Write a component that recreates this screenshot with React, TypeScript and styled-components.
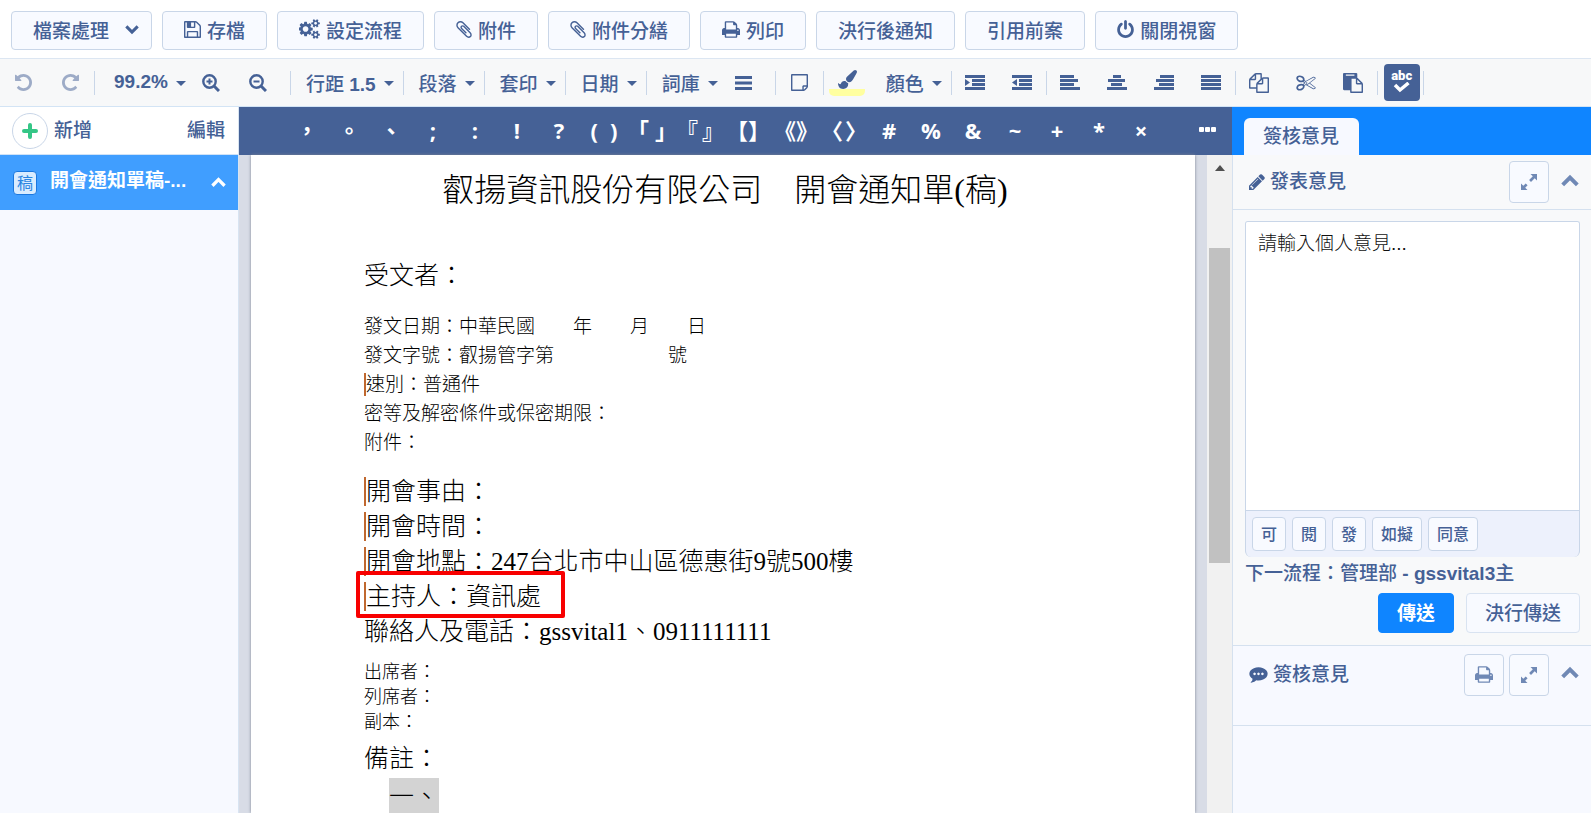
import React from "react";
import styled, { createGlobalStyle, css } from "styled-components";

const ink = "#456196";
const line = "#c9d6e8";
const panel = "#f7f9ff";
const uiFont = `"Liberation Sans", "Noto Sans CJK TC", sans-serif`;
const docFont = `"Liberation Serif", "Noto Sans CJK TC", serif`;

const GlobalStyle = createGlobalStyle`
  *, *::before, *::after { box-sizing: border-box; }
  body { margin: 0; font-family: ${uiFont}; font-size: 19px; color: ${ink}; background: #fff; }
  button, textarea { font-family: inherit; font-size: inherit; color: inherit; margin: 0; }
  button { cursor: pointer; }
  h1, h2, p, ul { margin: 0; padding: 0; font-weight: inherit; list-style: none; }
  svg { display: block; flex: none; }
`;

/* ---------- icons ---------- */

const paths = {
  save: "M512 1536h768v-384h-768v384zm896 0h128v-896q0-14-10-38.5t-20-34.5l-281-281q-10-10-34-20t-39-10v416q0 40-28 68t-68 28h-576q-40 0-68-28t-28-68v-416h-128v1280h128v-416q0-40 28-68t68-28h832q40 0 68 28t28 68v416zm-384-928v-320q0-13-9.5-22.5t-22.5-9.5h-192q-13 0-22.5 9.5t-9.5 22.5v320q0 13 9.5 22.5t22.5 9.5h192q13 0 22.5-9.5t9.5-22.5zm640 32v928q0 40-28 68t-68 28h-1344q-40 0-68-28t-28-68v-1344q0-40 28-68t68-28h928q40 0 88 20t76 48l280 280q28 28 48 76t20 88z",
  cogs: "M832 896q0-106-75-181t-181-75-181 75-75 181 75 181 181 75 181-75 75-181zm768 512q0-52-38-90t-90-38-90 38-38 90q0 53 37.5 90.5t90.5 37.5 90.5-37.5 37.5-90.5zm0-1024q0-52-38-90t-90-38-90 38-38 90q0 53 37.5 90.5t90.5 37.5 90.5-37.5 37.5-90.5zm-384 421v185q0 10-7 19.5t-16 10.5l-155 24q-11 35-32 76 34 48 90 115 7 11 7 20 0 12-7 19-23 30-82.5 89.5t-78.5 59.5q-11 0-21-7l-115-90q-37 19-77 31-11 108-23 155-7 24-30 24h-186q-11 0-20-7.5t-10-17.5l-23-153q-34-10-75-31l-118 89q-7 7-20 7-11 0-21-8-144-133-144-160 0-9 7-19 10-14 41-53t47-61q-23-44-35-82l-152-24q-10-1-17-9.5t-7-19.5v-185q0-10 7-19.5t16-10.5l155-24q11-35 32-76-34-48-90-115-7-11-7-20 0-12 7-20 22-30 82-89t79-59q11 0 21 7l115 90q34-18 77-32 11-108 23-154 7-24 30-24h186q11 0 20 7.5t10 17.5l23 153q34 10 75 31l118-89q8-7 20-7 11 0 21 8 144 133 144 160 0 8-7 19-12 16-42 54t-45 60q23 48 34 82l152 23q10 2 17 10.5t7 19.5zm640 533v140q0 16-149 31-12 27-30 52 51 113 51 138 0 4-4 7-122 71-124 71-8 0-46-47t-52-68q-20 2-30 2t-30-2q-14 21-52 68t-46 47q-2 0-124-71-4-3-4-7 0-25 51-138-18-25-30-52-149-15-149-31v-140q0-16 149-31 13-29 30-52-51-113-51-138 0-4 4-7 4-2 35-20t59-34 30-16q8 0 46 46.5t52 67.5q20-2 30-2t30 2q51-71 92-112l6-2q4 0 124 70 4 3 4 7 0 25-51 138 17 23 30 52 149 15 149 31zm0-1024v140q0 16-149 31-12 27-30 52 51 113 51 138 0 4-4 7-122 71-124 71-8 0-46-47t-52-68q-20 2-30 2t-30-2q-14 21-52 68t-46 47q-2 0-124-71-4-3-4-7 0-25 51-138-18-25-30-52-149-15-149-31v-140q0-16 149-31 13-29 30-52-51-113-51-138 0-4 4-7 4-2 35-20t59-34 30-16q8 0 46 46.5t52 67.5q20-2 30-2t30 2q51-71 92-112l6-2q4 0 124 70 4 3 4 7 0 25-51 138 17 23 30 52 149 15 149 31z",
  clip: "M1596 1385q0 117-79 196t-196 79q-135 0-235-100l-777-776q-113-115-113-271 0-159 110-270t269-111q158 0 273 113l605 606q10 10 10 22 0 16-30.5 46.5t-46.5 30.5q-13 0-23-10l-606-607q-79-77-181-77-106 0-179 75t-73 181q0 105 76 181l776 777q63 63 145 63 64 0 106-42t42-106q0-82-63-145l-581-581q-26-24-60-24-29 0-48 19t-19 48q0 32 25 59l410 410q10 10 10 22 0 16-31 47t-47 31q-12 0-22-10l-410-410q-63-61-63-149 0-82 57-139t139-57q88 0 149 63l581 581q100 98 100 235z",
  print: "M448 1536h896v-256h-896v256zm0-640h896v-384h-160q-40 0-68-28t-28-68v-160h-640v640zm1152 64q0-26-19-45t-45-19-45 19-19 45 19 45 45 19 45-19 19-45zm128 0v416q0 13-9.5 22.5t-22.5 9.5h-224v160q0 40-28 68t-68 28h-960q-40 0-68-28t-28-68v-160h-224q-13 0-22.5-9.5t-9.5-22.5v-416q0-79 56.5-135.5t135.5-56.5h64v-544q0-40 28-68t68-28h672q40 0 88 20t76 48l152 152q28 28 48 76t20 88v256h64q79 0 135.5 56.5t56.5 135.5z",
  power: "M1664 896q0 156-61 298t-164 245-245 164-298 61-298-61-245-164-164-245-61-298q0-182 80.5-343t226.5-270q43-32 95.5-25t83.5 50q32 42 24.5 94.5t-49.5 84.5q-98 74-151.5 181t-53.5 228q0 104 40.5 198.5t109.5 163.5 163.5 109.5 198.5 40.5 198.5-40.5 163.5-109.5 109.5-163.5 40.5-198.5q0-121-53.5-228t-151.5-181q-42-32-49.5-84.5t24.5-94.5q31-43 84-50t95 25q146 109 226.5 270t80.5 343zm-640-768v640q0 52-38 90t-90 38-90-38-38-90v-640q0-52 38-90t90-38 90 38 38 90z",
  undo: "M1664 896q0 156-61 298t-164 245-245 164-298 61q-172 0-327-72.5t-264-204.5q-7-10-6.5-22.5t8.5-20.5l137-138q10-9 25-9 16 2 23 12 73 95 179 147t225 52q104 0 198.5-40.5t163.5-109.5 109.5-163.5 40.5-198.5-40.5-198.5-109.5-163.5-163.5-109.5-198.5-40.5q-98 0-188 35.5t-160 101.5l137 138q31 30 14 69-17 40-59 40h-448q-26 0-45-19t-19-45v-448q0-42 40-59 39-17 69 14l130 129q107-101 244.5-156.5t284.5-55.5q156 0 298 61t245 164 164 245 61 298z",
  note: "M1400 1280h-248v248q29-10 41-22l185-185q12-12 22-41zm-280-128h288v-896h-1280v1280h896v-288q0-40 28-68t68-28zm416-928v1024q0 40-20 88t-48 76l-184 184q-28 28-76 48t-88 20h-1024q-40 0-68-28t-28-68v-1344q0-40 28-68t68-28h1344q40 0 68 28t28 68z",
  brush: "M1615 0q70 0 122.5 46.5t52.5 116.5q0 63-45 151-332 629-465 752-97 91-218 91-126 0-216.5-92.5t-90.5-219.5q0-128 92-212l638-579q59-54 130-54zm-909 1034q39 76 106.5 130t150.5 76l1 71q4 213-129.5 347t-348.5 134q-123 0-218-46.5t-152.5-127.5-86.5-183-29-220q7 5 41 30t62 44.5 59 36.5 46 17q41 0 55-37 25-66 57.5-112.5t69.5-76 88-47.5 103-25.5 125-10.5z",
  copy: "M1696 384q40 0 68 28t28 68v1216q0 40-28 68t-68 28h-960q-40 0-68-28t-28-68v-288h-544q-40 0-68-28t-28-68v-672q0-40 20-88t48-76l408-408q28-28 76-48t88-20h416q40 0 68 28t28 68v328q68-40 128-40h416zm-544 213l-299 299h299v-299zm-640-384l-299 299h299v-299zm196 647l316-316v-416h-384v416q0 40-28 68t-68 28h-416v640h512v-256q0-40 20-88t48-76zm956 804v-1152h-384v416q0 40-28 68t-68 28h-416v640h896z",
  cut: "M960 896q26 0 45 19t19 45-19 45-45 19-45-19-19-45 19-45 45-19zm300 64l507 398q28 20 25 56-5 35-35 51l-128 64q-13 7-29 7-17 0-31-8l-690-387-110 66q-8 4-12 5 14 49 10 97-7 77-56 147.5t-132 123.5q-132 84-277 84-136 0-222-78-90-84-79-207 7-76 56-147t131-124q132-84 278-84 83 0 151 31 9-13 22-22l122-73-122-73q-13-9-22-22-68 31-151 31-146 0-278-84-82-53-131-124t-56-147q-5-59 15.5-113t63.5-93q85-79 222-79 145 0 277 84 83 52 132 123t56 148q4 48-10 97 4 1 12 5l110 66 690-387q14-8 31-8 16 0 29 7l128 64q30 16 35 51 3 36-25 56zm-681-260q46-42 21-108t-106-117q-92-59-192-59-74 0-113 36-46 42-21 108t106 117q92 59 192 59 74 0 113-36zm-85 745q81-51 106-117t-21-108q-39-36-113-36-100 0-192 59-81 51-106 117t21 108q39 36 113 36 100 0 192-59zm178-613l96 58v-11q0-36 33-56l14-8-79-47-26 26q-3 3-10 11t-12 12q-2 2-4 3.5t-3 2.5zm224 224l96 32 736-576-128-64-768 431v113l-160 96 9 8q2 2 7 6 4 4 11 12t11 12l26 26zm704 416l128-64-520-408-177 138q-2 3-13 7z",
  paste: "M768 1664h896v-640h-416q-40 0-68-28t-28-68v-416h-384v1152zm256-1440v-64q0-13-9.5-22.5t-22.5-9.5h-704q-13 0-22.5 9.5t-9.5 22.5v64q0 13 9.5 22.5t22.5 9.5h704q13 0 22.5-9.5t9.5-22.5zm256 672h299l-299-299v299zm512 128v672q0 40-28 68t-68 28h-960q-40 0-68-28t-28-68v-160h-544q-40 0-68-28t-28-68v-1344q0-40 28-68t68-28h1088q40 0 68 28t28 68v328q21 13 36 28l408 408q28 28 48 76t20 88z",
  pencil: "M491 1536l91-91-235-235-91 91v107h128v128h107zm523-928q0-22-22-22-10 0-17 7l-542 542q-7 7-7 17 0 22 22 22 10 0 17-7l542-542q7-7 7-17zm-54-192l416 416-832 832h-416v-416zm683 96q0 53-37 90l-166 166-416-416 166-165q36-38 90-38 53 0 91 38l235 234q37 39 37 91z",
  comment: "M640 896q0-53-37.5-90.5t-90.5-37.5-90.5 37.5-37.5 90.5 37.5 90.5 90.5 37.5 90.5-37.5 37.5-90.5zm384 0q0-53-37.5-90.5t-90.5-37.5-90.5 37.5-37.5 90.5 37.5 90.5 90.5 37.5 90.5-37.5 37.5-90.5zm384 0q0-53-37.5-90.5t-90.5-37.5-90.5 37.5-37.5 90.5 37.5 90.5 90.5 37.5 90.5-37.5 37.5-90.5zm384 0q0 174-120 321.5t-326 233-450 85.5q-110 0-211-18-173 173-435 229-52 10-86 13-12 1-22-6t-13-18q-4-15 20-37 5-5 23.5-21.5t25.5-23.5 23.5-25.5 24-31.5 20.5-37 20-48 14.5-57.5 12.5-72.5q-146-90-229.5-216.5t-83.5-269.5q0-174 120-321.5t326-233 450-85.5 450 85.5 326 233 120 321.5z",
};

const boxes: Record<keyof typeof paths, string> = {
  save: "128 128 1536 1536",
  cogs: "0 0 1856 1792",
  clip: "192 130 1408 1536",
  print: "64 128 1664 1536",
  power: "128 0 1536 1664",
  undo: "128 128 1536 1536",
  note: "0 128 1536 1536",
  brush: "0 0 1792 1792",
  copy: "0 0 1792 1792",
  cut: "0 128 1792 1664",
  paste: "0 0 1792 1792",
  pencil: "128 128 1536 1536",
  comment: "0 128 1792 1664",
};

function Icon({ name, w, h, flip }: { name: keyof typeof paths; w: number; h: number; flip?: boolean }) {
  return (
    <svg width={w} height={h} viewBox={boxes[name]} fill="currentColor" aria-hidden="true">
      <path d={paths[name]} transform={flip ? "matrix(-1 0 0 1 1792 0)" : undefined} />
    </svg>
  );
}

function Chevron({ up, size }: { up?: boolean; size: number }) {
  return (
    <svg width={size} height={size} viewBox="0 0 16 16" fill="none" stroke="currentColor" strokeWidth="3.500" aria-hidden="true">
      <path d={up ? "M1.500 11.500L8 5l6.500 6.500" : "M1.500 5L8 11.500 14.500 5"} />
    </svg>
  );
}

function Magnifier({ plus }: { plus?: boolean }) {
  return (
    <svg width="18" height="18" viewBox="0 0 18 18" fill="none" stroke="currentColor" aria-hidden="true">
      <circle cx="7.500" cy="7.500" r="6.200" strokeWidth="2.400" />
      <path d="M12 12l5 5" strokeWidth="3" />
      <path d={plus ? "M4.500 7.500h6M7.500 4.500v6" : "M4.500 7.500h6"} strokeWidth="2" />
    </svg>
  );
}

function Lines({ rows, arrow }: { rows: [number, number][]; arrow?: string }) {
  return (
    <svg width="20" height="16" viewBox="0 0 20 16" fill="currentColor" aria-hidden="true">
      {rows.map(([x, w], i) => (
        <rect key={i} x={x} y={i * 4} width={w} height="3" />
      ))}
      {arrow && <path d={arrow} />}
    </svg>
  );
}

function Expand() {
  return (
    <svg width="18" height="18" viewBox="0 0 18 18" fill="currentColor" aria-hidden="true">
      <path d="M10.500 1H17v6.500l-2.300-2.300-3.700 3.700-1.900-1.900 3.700-3.700zM7.500 17H1v-6.500l2.300 2.300 2.400-2.400 1.900 1.900-2.400 2.400z" />
    </svg>
  );
}

/* ---------- page frame ---------- */

const Shell = styled.div`
  display: flex;
  flex-direction: column;
  height: 100vh;
  overflow: hidden;
`;

const ActionBar = styled.header`
  display: flex;
  flex: none;
  align-items: center;
  gap: 10px;
  padding: 11px 11px 8px;
  border-bottom: 1px solid #dce6f2;
`;

const OutlineButton = styled.button<{ $menu?: boolean }>`
  display: flex;
  flex: none;
  align-items: center;
  gap: 6px;
  height: 39px;
  padding: 0 21px 3px;
  border: 1px solid ${line};
  border-radius: 4px;
  background: #f8faff;
  font-weight: 500;
  white-space: nowrap;
  ${(p) => p.$menu && css`gap: 16px; padding-right: 12px;`}
`;

const Tools = styled.div`
  display: flex;
  flex: none;
  align-items: center;
  height: 48px;
  background: #f7f8f9;
  border-bottom: 1px solid #d3e4f5;
`;

const Group = styled.div<{ $tail?: boolean }>`
  display: flex;
  align-items: center;
  height: 24px;
  padding-right: ${(p) => (p.$tail ? 8 : 0)}px;
  border-right: 1px solid ${line};
`;

const ToolButton = styled.button<{ $off?: boolean }>`
  display: flex;
  align-items: center;
  justify-content: center;
  width: 47px;
  height: 38px;
  padding: 0;
  border: 0;
  background: none;
  opacity: ${(p) => (p.$off ? 0.5 : 1)};
`;

const DropButton = styled.button<{ $left?: number; $right?: number }>`
  display: flex;
  align-items: center;
  gap: 8px;
  height: 38px;
  padding: 0 ${(p) => p.$right ?? 9}px 1px ${(p) => p.$left ?? 15}px;
  border: 0;
  background: none;
  font-weight: 500;
  white-space: nowrap;
  &::after {
    content: "";
    margin-top: 3px;
    border: 5px solid transparent;
    border-top-color: ${ink};
    border-bottom: 0;
  }
`;

const Highlighter = styled(ToolButton)`
  flex-direction: column;
  height: 26px;
  &::after {
    content: "";
    width: 36px;
    height: 7px;
    border-radius: 0 0 5px 5px;
    background: #ffffa0;
  }
`;

const SpellButton = styled.button`
  display: flex;
  flex-direction: column;
  align-items: center;
  justify-content: center;
  width: 36px;
  height: 37px;
  margin: 0 3px 0 6px;
  padding: 0 0 2px;
  border: 0;
  border-radius: 4px;
  background: ${ink};
  color: #fff;
  font: 900 13px/12px Roboto, sans-serif;
`;

const Workspace = styled.div`
  display: flex;
  flex: 1;
  min-height: 0;
`;

/* ---------- sidebar ---------- */

const Sidebar = styled.aside`
  flex: none;
  width: 239px;
  border-right: 1px solid #d8e4f2;
  background: ${panel};
`;

const SidebarHead = styled.div`
  display: flex;
  align-items: center;
  gap: 6px;
  height: 48px;
  padding: 0 13px 0 12px;
  border-bottom: 1px solid #cfe2f7;
  background: #fff;
`;

const RoundButton = styled.button`
  display: grid;
  place-items: center;
  width: 36px;
  height: 36px;
  padding: 0;
  border: 1px solid ${line};
  border-radius: 50%;
  background: #fff;
  color: #35c686;
`;

const TextButton = styled.button`
  padding: 0 0 5px;
  border: 0;
  background: none;
  font-weight: 500;
  &:last-child { margin-left: auto; }
`;

const DraftItem = styled.button`
  display: flex;
  align-items: center;
  width: 100%;
  height: 55px;
  padding: 0 12px 0 13px;
  border: 0;
  background: #409eff;
  color: #fff;
  font-weight: 700;
  text-align: left;
`;

const DraftBadge = styled.span`
  width: 24px;
  height: 24px;
  margin-right: 13px;
  border: 1px solid #1a78e0;
  border-radius: 4px;
  background: #d9ecff;
  color: #2b86e2;
  font-size: 16px;
  font-weight: 400;
  line-height: 23px;
  text-align: center;
`;

const DraftName = styled.span`
  flex: 1;
  padding-bottom: 8px;
`;

/* ---------- editor ---------- */

const Editor = styled.main`
  display: flex;
  flex: 1;
  flex-direction: column;
  min-width: 0;
`;

const SymbolBar = styled.div`
  display: flex;
  flex: none;
  align-items: center;
  height: 48px;
  padding: 0 6px 0 47px;
  background: ${ink};
  color: #fff;
`;

const SymbolButton = styled.button<{ $pairGap?: number }>`
  display: flex;
  flex: none;
  align-items: center;
  justify-content: center;
  gap: ${(p) => p.$pairGap ?? 0}px;
  width: ${(p) => (p.$pairGap === undefined ? 42 : 48)}px;
  height: 48px;
  padding: 0 0 2px;
  border: 0;
  background: none;
  font: 700 22px/46px "Open Sans", "Noto Sans CJK TC", sans-serif;
  white-space: nowrap;
`;

const MoreButton = styled.button`
  display: flex;
  gap: 1px;
  margin-left: auto;
  padding: 0 10px 4px;
  border: 0;
  background: none;
  i { width: 5px; height: 5px; border-radius: 1px; background: #fff; }
`;

const Viewport = styled.div`
  display: flex;
  flex: 1;
  min-height: 0;
  background: #d8dce6;
`;

const Paper = styled.article`
  flex: 1;
  margin: 0 12px;
  padding: 15px 113px 0;
  overflow: hidden;
  background: #fff;
  box-shadow: 0 0 3px #7d8494;
  color: #000;
  font-family: ${docFont};
  font-weight: 300;
`;

const Title = styled.h1`
  padding-left: 4px;
  font-size: 32px;
  line-height: 40px;
  text-align: center;
  white-space: nowrap;
`;

const Block = styled.div<{ $size: number; $row: number; $top: number }>`
  margin-top: ${(p) => p.$top}px;
  font-size: ${(p) => p.$size}px;
  line-height: ${(p) => p.$row}px;
  white-space: pre;
`;

const Field = styled.p<{ $marked?: boolean }>`
  position: relative;
  display: flex;
  width: max-content;
  ${(p) => p.$marked && css`
    &::before { content: ""; width: 2px; margin: 3px 0; background: #c0682f; }
  `}
`;

const RedFrame = styled.span`
  position: absolute;
  inset: -8px -24px -4px -8px;
  border: 4px solid #f80000;
  border-radius: 2px;
`;

const ListMark = styled.span`
  display: inline-block;
  margin-left: 25px;
  background: #d3d3d3;
`;

const Scrollbar = styled.div`
  flex: none;
  width: 25px;
  padding: 10px 2px 0;
  background: #f1f1f1;
  &::before {
    content: "";
    display: block;
    width: 0;
    margin: 0 auto;
    border: 5px solid transparent;
    border-top: 0;
    border-bottom: 6px solid #505050;
  }
  &::after {
    content: "";
    display: block;
    height: 315px;
    margin-top: 77px;
    background: #c1c1c1;
  }
`;

/* ---------- review panel ---------- */

const Review = styled.aside`
  display: flex;
  flex: none;
  flex-direction: column;
  width: 359px;
  background: ${panel};
`;

const TabStrip = styled.div`
  display: flex;
  align-items: flex-end;
  height: 48px;
  padding: 0 12px;
  background: #0f85ff;
`;

const Tab = styled.button`
  height: 37px;
  padding: 0 20px 4px 19px;
  border: 0;
  border-radius: 6px 6px 0 0;
  background: ${panel};
  font-weight: 500;
`;

const Section = styled.section<{ $grey?: boolean }>`
  border: 1px solid #d5e1ef;
  border-width: 0 0 1px 1px;
  background: ${(p) => (p.$grey ? "#f8f9fa" : panel)};
`;

const Rest = styled.div`
  flex: 1;
  border-left: 1px solid #d5e1ef;
`;

const SectionHead = styled.div<{ $tall?: boolean }>`
  display: flex;
  align-items: center;
  gap: 5px;
  height: ${(p) => (p.$tall ? 79 : 55)}px;
  padding: 0 8px ${(p) => (p.$tall ? 22 : 0)}px 16px;
  border-bottom: ${(p) => (p.$tall ? 0 : 1)}px solid #d5e1ef;
  h2 {
    flex: 1;
    padding-bottom: 5px;
    font-size: 19px;
    font-weight: 500;
  }
`;

const SquareButton = styled.button`
  display: grid;
  place-items: center;
  width: 40px;
  height: 42px;
  padding: 0;
  border: 1px solid ${line};
  border-radius: 4px;
  background: #f8faff;
  color: #7089b5;
`;

const FoldButton = styled.button`
  width: 29px;
  padding: 0 0 3px 7px;
  border: 0;
  background: none;
  color: #7089b5;
`;

const Form = styled.form`
  padding: 11px 11px 12px 12px;
`;

const Opinion = styled.div`
  border: 1px solid ${line};
  border-bottom: 0;
  border-radius: 3px 3px 6px 6px;
  background: #edf1fc;
  overflow: hidden;
  textarea {
    display: block;
    width: 100%;
    height: 289px;
    padding: 10px 12px;
    border: 0;
    border-bottom: 1px solid ${line};
    background: #fff;
    line-height: 24px;
    resize: none;
    font-weight: 300;
    outline: 0;
  }
  textarea::placeholder { color: #111; opacity: 1; }
`;

const Phrases = styled.div`
  display: flex;
  gap: 6px;
  padding: 6px;
`;

const Phrase = styled.button`
  height: 34px;
  padding: 0 8px 3px;
  border: 1px solid ${line};
  border-radius: 4px;
  background: #f8faff;
  font-size: 16px;
  font-weight: 500;
`;

const NextStep = styled.p`
  padding: 3px 0 5px;
  font-weight: 500;
  line-height: 28px;
`;

const Submit = styled.div`
  display: flex;
  justify-content: flex-end;
  gap: 12px;
`;

const SendButton = styled.button<{ $primary?: boolean }>`
  height: 40px;
  padding: 0 18px 4px;
  border: 1px solid ${(p) => (p.$primary ? "#0f85ff" : "#d9e3f1")};
  border-radius: 4px;
  background: ${(p) => (p.$primary ? "#0f85ff" : "#f8faff")};
  color: ${(p) => (p.$primary ? "#fff" : ink)};
  font-weight: ${(p) => (p.$primary ? 700 : 500)};
`;

const singles = ["，", "。", "、", ";", ":", "!", "?"];
const pairs: [string, number][] = [["()", 12], ["「」", 6], ["『』", 4], ["【】", 0], ["《》", 0], ["〈〉", 2]];
const signs = ["#", "%", "&", "~", "+", "*", "×"];
const phrases = ["可", "閱", "發", "如擬", "同意"];

export default function App() {
  return (
    <Shell lang="zh-Hant-TW">
      <GlobalStyle />
      <ActionBar>
        <OutlineButton $menu>檔案處理<Chevron size={14} /></OutlineButton>
        <OutlineButton><Icon name="save" w={17} h={17} />存檔</OutlineButton>
        <OutlineButton><Icon name="cogs" w={21} h={20} />設定流程</OutlineButton>
        <OutlineButton><Icon name="clip" w={16} h={17} />附件</OutlineButton>
        <OutlineButton><Icon name="clip" w={16} h={17} />附件分繕</OutlineButton>
        <OutlineButton><Icon name="print" w={18} h={17} />列印</OutlineButton>
        <OutlineButton>決行後通知</OutlineButton>
        <OutlineButton>引用前案</OutlineButton>
        <OutlineButton><Icon name="power" w={17} h={18} />關閉視窗</OutlineButton>
      </ActionBar>

      <Tools role="toolbar">
        <Group>
          <ToolButton $off aria-label="復原"><Icon name="undo" w={17} h={17} /></ToolButton>
          <ToolButton $off aria-label="重做"><Icon name="undo" w={17} h={17} flip /></ToolButton>
        </Group>
        <Group $tail>
          <DropButton $left={19} $right={2}><b>99.2%</b></DropButton>
          <ToolButton aria-label="放大"><Magnifier plus /></ToolButton>
          <ToolButton aria-label="縮小"><Magnifier /></ToolButton>
        </Group>
        <Group><DropButton><span>行距 <b>1.5</b></span></DropButton></Group>
        <Group><DropButton>段落</DropButton></Group>
        <Group><DropButton>套印</DropButton></Group>
        <Group><DropButton>日期</DropButton></Group>
        <Group $tail>
          <DropButton $right={2}>詞庫</DropButton>
          <ToolButton aria-label="清單">
            <svg width="17" height="14" viewBox="0 0 17 14" fill="currentColor"><path d="M0 0h17v3H0zM0 5.500h17v3H0zM0 11h17v3H0z" /></svg>
          </ToolButton>
        </Group>
        <Group><ToolButton aria-label="便箋"><Icon name="note" w={17} h={17} /></ToolButton></Group>
        <Group>
          <Highlighter aria-label="螢光筆"><Icon name="brush" w={19} h={19} /></Highlighter>
          <DropButton>顏色</DropButton>
        </Group>
        <Group>
          <ToolButton aria-label="增加縮排"><Lines rows={[[0, 20], [7, 13], [7, 13], [0, 20]]} arrow="M0 4l5 3.500L0 11z" /></ToolButton>
          <ToolButton aria-label="減少縮排"><Lines rows={[[0, 20], [7, 13], [7, 13], [0, 20]]} arrow="M5 4L0 7.500 5 11z" /></ToolButton>
        </Group>
        <Group>
          <ToolButton aria-label="靠左"><Lines rows={[[0, 14], [0, 18], [0, 14], [0, 20]]} /></ToolButton>
          <ToolButton aria-label="置中"><Lines rows={[[6, 8], [1, 17], [4, 11], [0, 20]]} /></ToolButton>
          <ToolButton aria-label="靠右"><Lines rows={[[6, 14], [2, 18], [5, 15], [0, 20]]} /></ToolButton>
          <ToolButton aria-label="左右對齊"><Lines rows={[[0, 20], [0, 20], [0, 20], [0, 20]]} /></ToolButton>
        </Group>
        <Group>
          <ToolButton aria-label="複製"><Icon name="copy" w={20} h={20} /></ToolButton>
          <ToolButton aria-label="剪下"><Icon name="cut" w={20} h={18} /></ToolButton>
          <ToolButton aria-label="貼上"><Icon name="paste" w={20} h={20} /></ToolButton>
        </Group>
        <Group>
          <SpellButton aria-label="拼字檢查">
            abc
            <svg width="17" height="11" viewBox="0 0 17 11" fill="none" stroke="#fff" strokeWidth="3.500"><path d="M2 3l5 5 8.500-7" /></svg>
          </SpellButton>
        </Group>
      </Tools>

      <Workspace>
        <Sidebar>
          <SidebarHead>
            <RoundButton aria-label="新增文件">
              <svg width="16" height="16" viewBox="0 0 16 16" fill="none" stroke="currentColor" strokeWidth="4" strokeLinecap="round"><path d="M8 2v12M2 8h12" /></svg>
            </RoundButton>
            <TextButton>新增</TextButton>
            <TextButton>編輯</TextButton>
          </SidebarHead>
          <DraftItem>
            <DraftBadge>稿</DraftBadge>
            <DraftName>開會通知單稿-...</DraftName>
            <Chevron up size={15} />
          </DraftItem>
        </Sidebar>

        <Editor>
          <SymbolBar>
            {singles.map((s) => <SymbolButton key={s}>{s}</SymbolButton>)}
            {pairs.map(([s, gap]) => (
              <SymbolButton key={s} $pairGap={gap}><span>{s[0]}</span><span>{s[1]}</span></SymbolButton>
            ))}
            {signs.map((s) => <SymbolButton key={s}>{s}</SymbolButton>)}
            <MoreButton aria-label="更多"><i /><i /><i /></MoreButton>
          </SymbolBar>
          <Viewport>
            <Paper>
              <Title>叡揚資訊股份有限公司　開會通知單(稿)</Title>
              <Block $size={25} $row={35} $top={48}><Field>受文者：</Field></Block>
              <Block $size={19} $row={29} $top={19}>
                <Field>發文日期：中華民國　　年　　月　　日</Field>
                <Field>發文字號：叡揚管字第　　　　　　號</Field>
                <Field $marked>速別：普通件</Field>
                <Field>密等及解密條件或保密期限：</Field>
                <Field>附件：</Field>
              </Block>
              <Block $size={25} $row={35} $top={17}>
                <Field $marked>開會事由：</Field>
                <Field $marked>開會時間：</Field>
                <Field $marked>開會地點：247台北市中山區德惠街9號500樓</Field>
                <Field $marked>主持人：資訊處<RedFrame /></Field>
                <Field>聯絡人及電話：gssvital1、0911111111</Field>
              </Block>
              <Block $size={18} $row={25} $top={11}>
                <Field>出席者：</Field>
                <Field>列席者：</Field>
                <Field>副本：</Field>
              </Block>
              <Block $size={25} $row={38} $top={5}>
                <Field>備註：</Field>
                <ListMark>一、</ListMark>
              </Block>
            </Paper>
            <Scrollbar />
          </Viewport>
        </Editor>

        <Review>
          <TabStrip><Tab>簽核意見</Tab></TabStrip>
          <Section $grey>
            <SectionHead>
              <Icon name="pencil" w={16} h={16} />
              <h2>發表意見</h2>
              <SquareButton aria-label="展開"><Expand /></SquareButton>
              <FoldButton aria-label="收合"><Chevron up size={18} /></FoldButton>
            </SectionHead>
            <Form onSubmit={(e) => e.preventDefault()}>
              <Opinion>
                <textarea aria-label="發表意見" placeholder="請輸入個人意見..." />
                <Phrases>
                  {phrases.map((p) => <Phrase key={p} type="button">{p}</Phrase>)}
                </Phrases>
              </Opinion>
              <NextStep>下一流程：管理部 <b>- gssvital3</b>主</NextStep>
              <Submit>
                <SendButton $primary>傳送</SendButton>
                <SendButton type="button">決行傳送</SendButton>
              </Submit>
            </Form>
          </Section>
          <Section>
            <SectionHead $tall>
              <Icon name="comment" w={19} h={17} />
              <h2>簽核意見</h2>
              <SquareButton aria-label="列印意見"><Icon name="print" w={18} h={17} /></SquareButton>
              <SquareButton aria-label="展開意見"><Expand /></SquareButton>
              <FoldButton aria-label="收合意見"><Chevron up size={18} /></FoldButton>
            </SectionHead>
          </Section>
          <Rest />
        </Review>
      </Workspace>
    </Shell>
  );
}
